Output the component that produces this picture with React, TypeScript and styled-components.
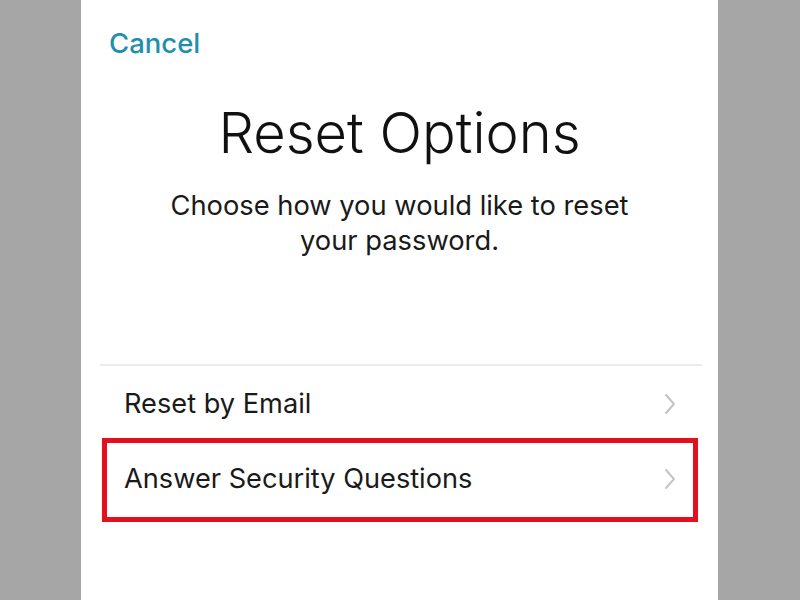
import styled, { createGlobalStyle } from "styled-components";

const GlobalStyle = createGlobalStyle`
  html, body {
    margin: 0;
    padding: 0;
    background: #a6a6a6;
  }
  body {
    font-family: "Inter", "Liberation Sans", sans-serif;
    -webkit-font-smoothing: antialiased;
  }
`;

const Stage = styled.div`
  display: flex;
  justify-content: flex-start;
  width: 800px;
  height: 600px;
  overflow: hidden;
`;

const Screen = styled.div`
  display: flex;
  flex-direction: column;
  width: 637px;
  height: 600px;
  margin-left: 81px;
  background: #ffffff;
`;

const NavBar = styled.div`
  display: flex;
  align-items: center;
  height: 44px;
  padding: 21px 0 0 28px;
`;

const CancelButton = styled.button`
  border: none;
  background: none;
  padding: 0;
  font-family: inherit;
  font-size: 27.5px;
  font-weight: 500;
  color: #1f8fac;
  cursor: pointer;
`;

const Header = styled.div`
  display: flex;
  flex-direction: column;
  align-items: center;
  padding-top: 33px;
`;

const Title = styled.h1`
  margin: 0;
  font-size: 56px;
  font-weight: 300;
  line-height: 70px;
  color: #111111;
`;

const Subtitle = styled.p`
  margin: 20px 0 0;
  width: 490px;
  text-align: center;
  font-size: 27.3px;
  line-height: 35px;
  color: #1a1a1a;
`;

const OptionList = styled.div`
  display: flex;
  flex-direction: column;
  margin: 106px 16px 0 19px;
  border-top: 2px solid #ebebeb;
`;

const OptionRow = styled.div<{ $highlight?: boolean }>`
  position: relative;
  display: flex;
  align-items: center;
  justify-content: space-between;
  height: 75px;
  padding: 0 26px 0 24px;
  font-size: 27.2px;
  color: #1a1a1a;

  ${({ $highlight }) =>
    $highlight &&
    `
    &::after {
      content: "";
      position: absolute;
      left: 2px;
      right: 4px;
      top: -3px;
      bottom: -6px;
      border: 5px solid #e5101f;
      pointer-events: none;
    }
  `}
`;

const Chevron = () => (
  <svg width="12" height="22" viewBox="0 0 12 22" fill="none">
    <path d="M2 2l8 9-8 9" stroke="#c4c4c8" strokeWidth="2" strokeLinecap="round" strokeLinejoin="round" />
  </svg>
);

const options = [
  { label: "Reset by Email", highlight: false },
  { label: "Answer Security Questions", highlight: true },
];

export default function App() {
  return (
    <>
      <GlobalStyle />
      <Stage>
        <Screen>
          <NavBar>
            <CancelButton>Cancel</CancelButton>
          </NavBar>
          <Header>
            <Title>Reset Options</Title>
            <Subtitle>Choose how you would like to reset your password.</Subtitle>
          </Header>
          <OptionList>
            {options.map((o) => (
              <OptionRow key={o.label} $highlight={o.highlight}>
                <span>{o.label}</span>
                <Chevron />
              </OptionRow>
            ))}
          </OptionList>
        </Screen>
      </Stage>
    </>
  );
}
